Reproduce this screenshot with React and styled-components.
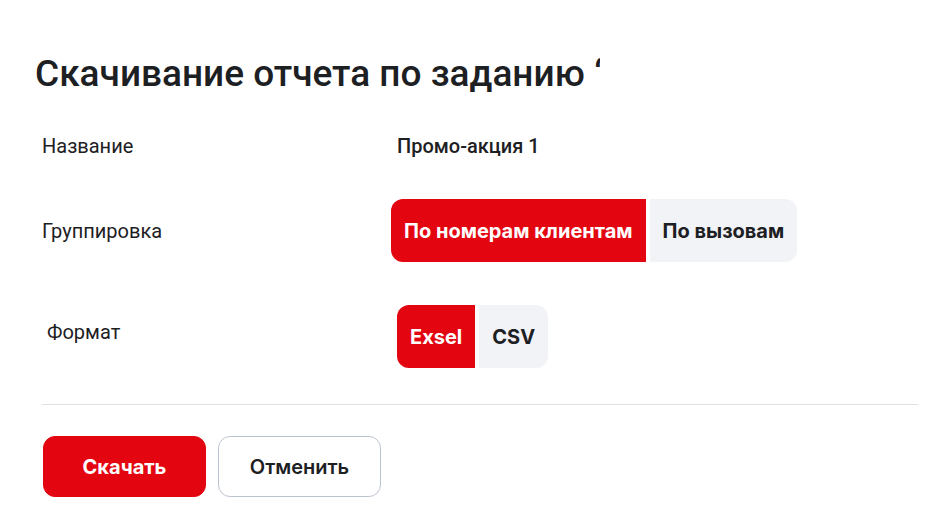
import styled, { createGlobalStyle } from 'styled-components';

const GlobalStyle = createGlobalStyle`
  body {
    margin: 0;
    background: #ffffff;
    font-family: Roboto, 'Liberation Sans', sans-serif;
    color: #1d2023;
  }
`;

const Modal = styled.div`
  display: flex;
  flex-direction: column;
  width: 876px;
  padding: 52px 30px 0 42px;
`;

// заголовок обрезается справа, как в макете
const Title = styled.h1`
  margin: 0 0 0 -7px;
  width: 565px;
  overflow: hidden;
  white-space: nowrap;
  font-size: 37px;
  font-weight: 500;
  line-height: 44px;
  color: #1d2023;
`;

const Rows = styled.div`
  display: flex;
  flex-direction: column;
  margin-top: 30px;
`;

const Row = styled.div`
  display: grid;
  grid-template-columns: 349px 1fr;
  align-items: center;
  height: ${(p) => p.$height}px;
  margin-bottom: ${(p) => p.$gap}px;
  padding-left: ${(p) => p.$shift || 0}px;
`;

const Label = styled.span`
  font-size: 20px;
  line-height: 24px;
  color: #1d2023;
  margin-bottom: ${(p) => p.$raise || 0}px;
`;

const Value = styled.span`
  padding-left: 6px;
  font-size: 20px;
  font-weight: 500;
  line-height: 24px;
`;

const Segments = styled.div`
  display: flex;
  gap: 4px;
  margin-left: ${(p) => p.$offset || 0}px;
`;

const Segment = styled.button`
  height: 63px;
  padding: 0 13px;
  border: none;
  font-family: Inter, 'Liberation Sans', sans-serif;
  font-size: 20px;
  font-weight: 700;
  cursor: pointer;
  background: ${(p) => (p.$active ? '#e30611' : '#f2f3f7')};
  color: ${(p) => (p.$active ? '#ffffff' : '#1d2023')};
  &:first-child {
    border-radius: 12px 0 0 12px;
  }
  &:last-child {
    border-radius: 0 12px 12px 0;
  }
`;

const Divider = styled.hr`
  margin: 0;
  border: none;
  border-top: 1px solid #dddfe3;
`;

const Actions = styled.div`
  display: flex;
  gap: 12px;
  margin-top: 31px;
  margin-left: 1px;
`;

const ActionBtn = styled.button`
  width: 163px;
  height: 61px;
  border-radius: 12px;
  font-family: Inter, 'Liberation Sans', sans-serif;
  font-size: 20px;
  font-weight: ${(p) => (p.$primary ? 700 : 600)};
  cursor: pointer;
  border: 1px solid ${(p) => (p.$primary ? '#e30611' : '#bcc3d0')};
  background: ${(p) => (p.$primary ? '#e30611' : '#ffffff')};
  color: ${(p) => (p.$primary ? '#ffffff' : '#1d2023')};
`;

const App = () => {
  return (
    <>
      <GlobalStyle />
      <Modal>
        <Title>Скачивание отчета по заданию “Промо-акция 1”</Title>
        <Rows>
          <Row $height={40} $gap={33}>
            <Label>Название</Label>
            <Value>Промо-акция 1</Value>
          </Row>
          <Row $height={63} $gap={43}>
            <Label>Группировка</Label>
            <Segments>
              <Segment $active>По номерам клиентам</Segment>
              <Segment>По вызовам</Segment>
            </Segments>
          </Row>
          <Row $height={63} $gap={36} $shift={5}>
            <Label $raise={10}>Формат</Label>
            <Segments $offset={1}>
              <Segment $active>Exsel</Segment>
              <Segment>CSV</Segment>
            </Segments>
          </Row>
        </Rows>
        <Divider />
        <Actions>
          <ActionBtn $primary>Скачать</ActionBtn>
          <ActionBtn>Отменить</ActionBtn>
        </Actions>
      </Modal>
    </>
  );
};

export default App;
